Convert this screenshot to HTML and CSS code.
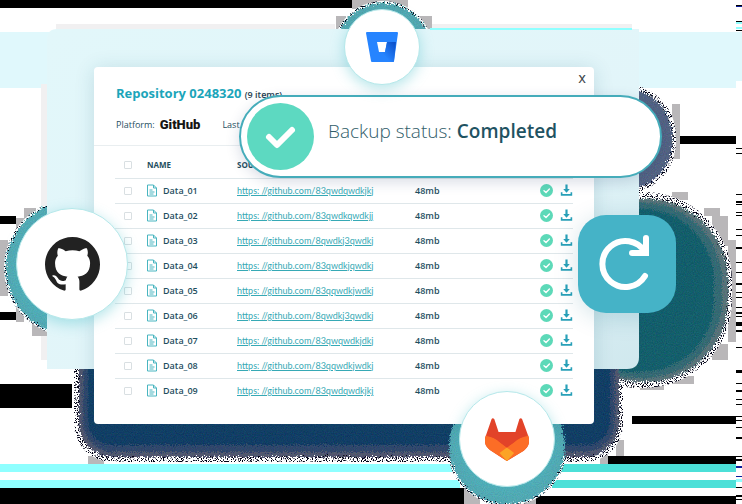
FILE: index.html
```html
<!DOCTYPE html>
<html lang="en">
<head>
<meta charset="utf-8">
<meta name="viewport" content="width=device-width, initial-scale=1">
<title>Repository backup</title>
<link rel="stylesheet" href="styles.css">
</head>
<body>
<main class="stage">
  <svg class="backdrop" viewBox="0 0 742 504" preserveAspectRatio="none" aria-hidden="true">
    <defs>
      <filter id="grain" x="-10%" y="-10%" width="120%" height="120%" color-interpolation-filters="sRGB">
        <feTurbulence type="fractalNoise" baseFrequency="0.9" numOctaves="2" seed="4" result="n"/>
        <feDisplacementMap in="SourceGraphic" in2="n" scale="8" xChannelSelector="R" yChannelSelector="G" result="d"/>
        <feColorMatrix in="n" type="matrix" values="1 0 0 0 -.1  0 1 0 0 -.1  0 0 1 0 -.1  0 0 0 0 .16" result="c"/>
        <feComposite in="c" in2="d" operator="in" result="g"/>
        <feMerge><feMergeNode in="d"/><feMergeNode in="g"/></feMerge>
      </filter>
      <filter id="speckle" x="-10%" y="-10%" width="120%" height="120%" color-interpolation-filters="sRGB">
        <feTurbulence type="fractalNoise" baseFrequency="0.8" numOctaves="1" seed="9" result="n"/>
        <feColorMatrix in="n" type="matrix" values="0 0 0 0 0  0 0 0 0 0  0 0 0 0 .08  14 0 0 0 -7.4" result="m"/>
        <feComposite in="m" in2="SourceGraphic" operator="in"/>
      </filter>
      <linearGradient id="panel" x1="0" x2="1" y1="0" y2="1">
        <stop offset="0" stop-color="#e2f7fa"/><stop offset=".6" stop-color="#e2f5f9"/><stop offset="1" stop-color="#d0e8ee"/>
      </linearGradient>
    </defs>
    <g shape-rendering="crispEdges">
      <path d="M0 0h352v8H0zM0 216h16v8H0zM0 312h16v8H0zM0 384h72v24H0zM0 488h480v16H0zM680 136h56v8h-56zM632 416h104v8H632zM608 456h128v8H608zM536 496h200v8H536z"/>
      <path fill="#e0f8fc" d="M0 32h60v56H0zM630 32h112v49h-6v7H630z"/>
      <path fill="#8fffff" d="M0 464h455v8H0zM0 480h460v8H0z"/>
      <path fill="#4ce0d8" d="M558 464h178v8H558zM552 480h184v8H552z"/>
      <path fill="#b9b7b9" d="M24 208h12v10H24zM16 218h9v14h-9zM0 240h8v56H0zM16 296h8v26h-8zM32 322h15v14H32zM88 456h16v8H88zM352 0h56v9h-56zM336 16h10v14h-10zM416 16h16v14h-16zM464 487h16v17h-16zM520 495h16v9h-16zM672 104h8v55h-8zM672 192h16v8h-16zM704 208h16v8h-16zM712 216h16v30h-16zM728 240h8v102h-8zM712 344h16v16h-16zM672 376h22v8h-22zM640 384h24v6h-24zM616 440h8v16h-8zM600 448h8v16h-8z"/>
      <path d="M736 5h6v2h-6zM736 21h6v1h-6zM736 30h6v1h-6zM736 148h6v1h-6zM736 153h6v1h-6zM736 194h6v1h-6zM736 201h6v2h-6zM736 204h6v1h-6zM736 212h6v1h-6zM736 215h6v1h-6zM736 229h6v1h-6zM736 235h6v1h-6zM736 247h6v2h-6zM736 262h6v1h-6zM736 272h6v1h-6zM736 283h6v2h-6zM736 292h6v1h-6zM736 297h6v1h-6zM736 307h6v1h-6zM736 312h6v2h-6zM736 316h6v1h-6zM736 322h6v4h-6zM736 330h6v2h-6zM736 347h6v1h-6zM736 370h6v3h-6zM736 383h6v1h-6zM736 390h6v2h-6zM736 399h6v1h-6zM736 404h6v1h-6zM736 416h6v1h-6zM736 420h6v1h-6zM736 427h6v1h-6zM736 437h6v2h-6zM736 456h6v1h-6zM736 459h6v2h-6zM736 487h6v1h-6zM736 495h6v2h-6zM736 499h6v1h-6z"/>
      <path fill="#0b1c9a" d="M736 6h6v1h-6zM736 466h6v2h-6zM736 476h6v1h-6z"/>
      <path fill="#8fffff" d="M736 22h6v2h-6zM736 27h6v2h-6zM736 479h6v3h-6z"/>
    </g>
    <g fill="#fff">
      <rect x="74" y="300" width="549" height="162" rx="38"/>
      <rect x="550" y="192" width="182" height="196" rx="88"/>
      <rect x="560" y="84" width="116" height="110" rx="52"/>
      <circle cx="73" cy="268" r="69"/><circle cx="383" cy="51" r="50"/><circle cx="507" cy="446" r="60"/>
    </g>
    <g filter="url(#speckle)">
      <rect x="74" y="300" width="549" height="162" rx="38"/>
      <rect x="550" y="192" width="182" height="196" rx="88"/>
      <rect x="560" y="84" width="116" height="110" rx="52"/>
      <circle cx="73" cy="268" r="69"/><circle cx="383" cy="51" r="50"/><circle cx="507" cy="446" r="60"/>
    </g>
    <g filter="url(#grain)">
      <rect x="560" y="88" width="112" height="102" rx="48" fill="#50638a"/>
      <rect x="560" y="199" width="168" height="183" rx="82" fill="#55757d"/>
      <rect x="560" y="203" width="162" height="175" rx="78" fill="#2b6a77"/>
      <rect x="560" y="209" width="154" height="163" rx="72" fill="#055e6d"/>
      <rect x="79" y="300" width="540" height="157" rx="34" fill="#4c5470"/>
      <rect x="83" y="300" width="532" height="152" rx="30" fill="#25426d"/>
      <rect x="88" y="300" width="522" height="145" rx="24" fill="#033766"/>
      <circle cx="73" cy="268" r="67" fill="#4fb5c2"/>
      <circle cx="383" cy="51" r="48" fill="#4fb2bd"/>
      <circle cx="507" cy="446" r="58" fill="#4fb5c2"/>
    </g>
    <path fill="url(#panel)" d="M57 29h582v328q0 12-12 12H47V40q0-11 10-11z"/>
    <path fill="#f1f0f1" d="M56 24h279v5H56zM432 24h200v4H432zM41 84h6v122h-6zM41 336h6v24h-6z"/>
    <path fill="#8fffff" d="M430 28h202v2H430z"/>
  </svg>

  <section class="window" aria-labelledby="repo-title">
    <header class="window-head">
      <button class="close" type="button" aria-label="Close">X</button>
      <h1 class="title" id="repo-title">Repository 0248320 <small class="count">(9 items)</small></h1>
      <p class="meta"><span>Platform:</span><strong class="wordmark">GitHub</strong><span class="last">Last</span></p>
    </header>
    <div class="table-wrap">
      <table class="files">
        <colgroup><col class="c-pick"><col class="c-name"><col class="c-source"><col class="c-size"><col class="c-act"></colgroup>
        <thead><tr><th><input type="checkbox" aria-label="Select all"></th><th scope="col">NAME</th><th scope="col">SOURCE</th><th></th><th></th></tr></thead>
        <tbody id="rows"></tbody>
      </table>
    </div>
  </section>

  <div class="status" role="status">
    <svg class="status-icon" viewBox="0 0 67 67" aria-hidden="true"><circle cx="33.500" cy="33.500" r="33.500" fill="#5dd9c1"/><path d="M22 34l8 8 15-15" fill="none" stroke="#fff" stroke-width="6" stroke-linecap="round" stroke-linejoin="round"/></svg>
    <p class="status-text">Backup status: <strong>Completed</strong></p>
  </div>

  <div class="badge bitbucket">
    <svg viewBox="0 0 32 30" role="img" aria-label="Bitbucket">
      <defs><linearGradient id="bb" x1="31" y1="10" x2="17" y2="22" gradientUnits="userSpaceOnUse"><stop offset=".15" stop-color="#0c52cc"/><stop offset="1" stop-color="#2684ff"/></linearGradient></defs>
      <path fill="#2684ff" fill-rule="evenodd" d="M1 0h30q1 0 1 1l-4 28q0 1-1 1H6q-1 0-1-1L0 1q0-1 1-1zM11 10l2 10h6l2-10z"/>
      <path fill="url(#bb)" d="M30 10h-9l-2 10h-6l-7 9q0 1 1 1h20q1 0 1-1z"/>
    </svg>
  </div>
  <div class="badge github">
    <svg viewBox="0 0 16 16" role="img" aria-label="GitHub"><path fill="#222" d="M8 0C3.580 0 0 3.580 0 8c0 3.540 2.290 6.530 5.470 7.590.4.070.55-.17.55-.38 0-.19-.01-.82-.01-1.490-2.010.37-2.530-.49-2.690-.94-.09-.23-.48-.94-.82-1.130-.28-.15-.68-.52-.01-.53.63-.01 1.080.58 1.230.82.72 1.210 1.870.87 2.330.66.070-.52.28-.87.51-1.070-1.780-.2-3.640-.89-3.640-3.950 0-.87.31-1.590.82-2.150-.08-.2-.36-1.020.08-2.120 0 0 .67-.21 2.200.82.64-.18 1.320-.27 2-.27.68 0 1.360.09 2 .27 1.530-1.040 2.200-.82 2.200-.82.44 1.100.16 1.920.08 2.120.51.56.82 1.270.82 2.150 0 3.070-1.870 3.750-3.650 3.950.29.25.54.73.54 1.480 0 1.070-.01 1.930-.01 2.200 0 .21.15.46.55.38A8.010 8.010 0 0016 8c0-4.420-3.580-8-8-8z"/></svg>
  </div>
  <div class="badge gitlab">
    <svg viewBox="0 0 133 130" role="img" aria-label="GitLab">
      <path fill="#e24329" d="M20 3q3-5 8 0l13 39h51l12-39q4-5 8 0l18 49q11 28-13 47L66 130 15 97Q-8 78 3 52z"/>
      <path fill="#fc6d26" d="M3 52q24 4 43 22l20 15 21-15q19-18 43-22 11 28-13 47L66 130 15 97Q-8 78 3 52z"/>
      <path fill="#fca326" d="M66 89l22 17q-11 13-22 24-11-11-22-24z"/>
      <path fill="#e24329" d="M2 54L66 42l65 12q-26 4-44 20L66 89 46 74Q28 58 2 54z"/>
    </svg>
  </div>
  <button class="sync" type="button" aria-label="Run backup again">
    <svg viewBox="0 0 98 98" aria-hidden="true"><path d="M67 37A23 23 0 1 0 67 61M68 23v15H54" fill="none" stroke="#fff" stroke-width="6" stroke-linecap="round" stroke-linejoin="miter"/></svg>
  </button>
</main>

<svg class="sprite" aria-hidden="true">
  <symbol id="i-file" viewBox="0 0 10 12"><path d="M.5.5h6l3 3v8h-9zM6.500.5v3h3" fill="none" stroke="#48b5c0"/><path d="M2.500 5.500h3M2.500 7.500h5M2.500 9.500h4" stroke="#48b5c0"/></symbol>
  <symbol id="i-ok" viewBox="0 0 13 13"><circle cx="6.500" cy="6.500" r="6.500" fill="#5dd9b8"/><path d="M4 6.700l2 1.800 3.400-3.500" fill="none" stroke="#fff" stroke-width="1.400" stroke-linecap="round"/></symbol>
  <symbol id="i-down" viewBox="0 0 12 12"><path d="M1.500 7.500V10h9V7.500" fill="none" stroke="#28a0b8" stroke-width="1.500"/><path d="M5 .5h2v4h2L6 8 3 4.500h2z" fill="#28a0b8"/></symbol>
</svg>
<script src="rows.js"></script>
</body>
</html>
```
FILE: styles.css
```css
* { box-sizing: border-box; }
body {
  margin: 0;
  background: #fff;
  color: #1f4f5f;
  font-family: "Open Sans", "Noto Sans", sans-serif;
}
.stage {
  position: relative;
  min-height: 100vh;
  padding: 67px 148px 80px 94px;
  overflow: hidden;
}
.backdrop {
  position: absolute;
  inset: 0;
  width: 100%;
  height: 100%;
}
.sprite { display: none; }

.window {
  position: relative;
  background: #fff;
  border-radius: 4px;
  box-shadow: 0 2px 20px rgba(20, 90, 110, .16);
}
.window-head {
  position: relative;
  padding: 15px 22px 14px;
  border-bottom: 1px solid #e9eef0;
}
.close {
  position: absolute;
  top: 4px;
  right: 4px;
  padding: 0 4px;
  border: 0;
  background: none;
  color: #3e474b;
  font: 500 11px/16px Inter, sans-serif;
}
.title {
  margin: 0;
  color: #1ba5ba;
  font-size: 13px;
  font-weight: 700;
  line-height: 22px;
}
.count {
  color: #1f4050;
  font-size: 9px;
  font-weight: 600;
}
.meta {
  display: flex;
  align-items: center;
  margin: 13px 0 0;
  font-size: 9px;
  line-height: 12px;
}
.wordmark {
  margin-left: 5px;
  color: #151515;
  font-family: Roboto, sans-serif;
  font-size: 13px;
  font-weight: 900;
}
.last { margin-left: 22px; }

.table-wrap { padding: 0 21px 21px; }
.files {
  width: 100%;
  border-collapse: collapse;
  table-layout: fixed;
  font-size: 9px;
  font-weight: 600;
  line-height: 12px;
}
.c-pick { width: 32px; }
.c-name { width: 90px; }
.c-size { width: 125px; }
.c-act { width: 33px; }
.files th, .files td {
  height: 25px;
  padding: 0;
  border-bottom: 1px solid #dfe7ea;
  text-align: left;
  vertical-align: middle;
}
.files th {
  height: 32px;
  padding-top: 7px;
  font-size: 8px;
  font-weight: 700;
}
.files tr:last-child td { border-bottom: 0; }
.files input {
  display: block;
  width: 8px;
  height: 8px;
  margin: 0 0 0 9px;
  appearance: none;
  border: 1px solid #d9dfe2;
  border-radius: 1px;
  background: #fff;
}
.name, .actions {
  display: flex;
  align-items: center;
}
.name { gap: 6px; }
.actions { justify-content: space-between; }
.name svg { width: 10px; height: 13px; }
.actions svg { width: 13px; height: 13px; }
.actions button {
  display: flex;
  padding: 0;
  border: 0;
  background: none;
}
.files a {
  color: #36a9b5;
  font-family: Lato, sans-serif;
  font-weight: 400;
  text-decoration: underline;
}

.status {
  position: absolute;
  top: 95px;
  left: 239px;
  right: 80px;
  display: flex;
  align-items: center;
  gap: 14px;
  height: 83px;
  padding: 0 6px;
  border: 2px solid #45acba;
  border-radius: 42px;
  background: #fff;
  box-shadow: 0 4px 14px rgba(40, 60, 110, .18);
}
.status-icon { width: 67px; height: 67px; }
.status-text {
  margin: 0;
  padding-bottom: 12px;
  color: #315d69;
  font-size: 19px;
  font-weight: 300;
  line-height: 24px;
}
.status-text strong { color: #1f5362; font-weight: 600; }

.badge {
  position: absolute;
  display: grid;
  place-items: center;
  border: 1px solid #b5e8ea;
  border-radius: 50%;
  background: #fff;
  box-shadow: 0 4px 14px rgba(70, 190, 200, .4);
}
.bitbucket { top: 9px; left: 344px; width: 76px; height: 76px; }
.bitbucket svg { width: 32px; height: 30px; }
.github { top: 208px; left: 16px; width: 112px; height: 112px; }
.github svg { width: 55px; height: 55px; }
.gitlab { top: 391px; right: 187px; width: 96px; height: 96px; }
.gitlab svg { width: 44px; height: 43px; }
.sync {
  position: absolute;
  top: 215px;
  right: 66px;
  width: 98px;
  height: 98px;
  padding: 0;
  border: 0;
  border-radius: 28px;
  background: #45b3c7;
  box-shadow: 0 4px 24px rgba(10, 100, 130, .18);
}
.sync svg { display: block; width: 98px; height: 98px; }
```
FILE: rows.js
```js
const sources = [
  "83qwdqwdkjkj", "83qwdkqwdkjj", "8qwdkj3qwdkj", "83qwdkjqwdkj", "83qqwdkjwdkj",
  "8qwdkj3qwdkj", "83qwqwdkjdkj", "83qqwdkjwdkj", "83qwdqwdkjkj"
];
document.getElementById("rows").innerHTML = sources.map((id, i) => {
  const name = `Data_0${i + 1}`;
  return `<tr>
    <td><input type="checkbox" aria-label="Select ${name}"></td>
    <td><span class="name"><svg><use href="#i-file"/></svg>${name}</span></td>
    <td><a href="https://github.com/${id}">https: //github.com/${id}</a></td>
    <td>48mb</td>
    <td><span class="actions"><svg><use href="#i-ok"/></svg><button type="button" aria-label="Download ${name}"><svg><use href="#i-down"/></svg></button></span></td>
  </tr>`;
}).join("");
```
